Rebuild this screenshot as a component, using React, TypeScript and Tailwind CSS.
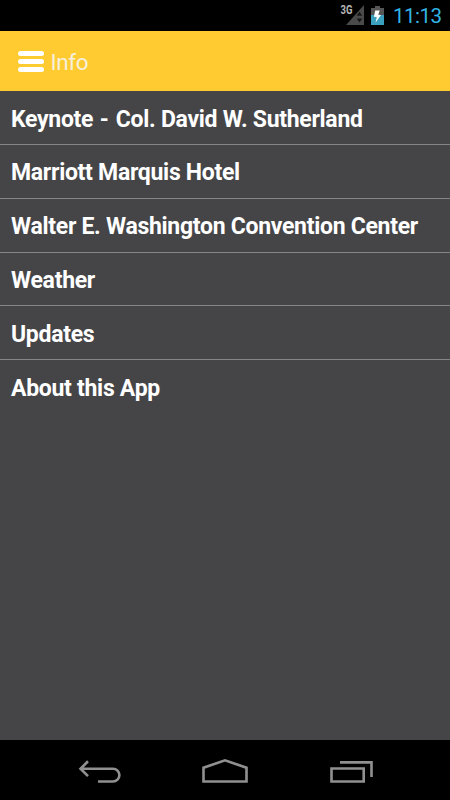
const items = [
  { label: "Keynote - Col. David W. Sutherland" },
  { label: "Marriott Marquis Hotel" },
  { label: "Walter E. Washington Convention Center" },
  { label: "Weather" },
  { label: "Updates" },
  { label: "About this App" },
];

function StatusBar() {
  return (
    <div className="flex h-[31px] shrink-0 items-start justify-end bg-black pr-2">
      <svg className="mt-[3px] mr-[6px] shrink-0" width="25" height="24" viewBox="0 0 25 24">
        <path d="M24 2V22H6Z" fill="#4a4a4a" />
        <path d="M19.5 8.7 22.3 12.8h-5.6ZM19.5 19.5 22.3 15.4h-5.6Z" fill="#161616" />
        <text x="0.6" y="11.3" fill="#b5b5b5" stroke="#000" strokeWidth="2" paintOrder="stroke" fontFamily="Roboto, sans-serif" fontWeight="700" fontSize="12" textLength="12" lengthAdjust="spacingAndGlyphs">3G</text>
      </svg>
      <svg className="mt-[5px] mr-[9px] shrink-0" width="13" height="20" viewBox="0 0 13 20">
        <path d="M4 1h5v2h4v7H0V3h4Z" fill="#565656" />
        <path d="M0 10h13v10H0Z" fill="#3aa0bd" />
        <path d="M4.2 5.5h4.5L7.3 9.7l2.7.3-5.4 7.6 1.2-5.6-2.9-.3Z" fill="#fff" />
      </svg>
      <span className="mt-1 h-6 w-[49px] whitespace-nowrap text-[20.5px] leading-6 tracking-[-0.5px] text-[#33b5e5]">11:13</span>
    </div>
  );
}

function Header() {
  return (
    <header className="flex h-[60.4px] shrink-0 items-center bg-[#ffcb31] pl-[18px]">
      <div className="flex w-[26px] flex-col gap-[3px]">
        <div className="h-[5px] rounded-full bg-white" />
        <div className="h-[5px] rounded-full bg-white" />
        <div className="h-[5px] rounded-full bg-white" />
      </div>
      <h1 className="ml-[6.5px] mt-[2px] text-[22.5px] font-normal leading-7 tracking-[-0.4px] text-[#f6efdc]">Info</h1>
    </header>
  );
}

function NavBar() {
  return (
    <nav className="flex h-[60px] shrink-0 bg-black">
      <svg width="450" height="60" viewBox="0 0 450 60" fill="none" stroke="#909090" strokeWidth="2.6">
        <path d="M80.5 28.7H113a6.4 6.4 0 0 1 0 12.8H98M88 21.3 80.5 28.7l7.5 7.4" />
        <path d="M203.5 41.5V27.7L225 20.3l21.5 7.4v13.8Z" />
        <path d="M331.5 28.5h32.2v13h-32.2ZM340 22.4h31.5V37" />
      </svg>
    </nav>
  );
}

function Label({ text }: { text: string }) {
  const [lead, ...rest] = text.split(" - ");
  if (rest.length === 0) return <>{text}</>;
  return (
    <>
      {lead}
      <span className="tracking-[0.7px]"> - </span>
      {rest.join(" - ")}
    </>
  );
}

export default function App() {
  return (
    <div className="flex h-[800px] w-[450px] flex-col overflow-hidden bg-[#454547] font-['Roboto',sans-serif]">
      <StatusBar />
      <Header />
      <main className="flex-1">
        {items.map((item, index) => (
          <div
            key={item.label}
            className={
              index < items.length - 1
                ? "flex h-[53.75px] items-center border-b border-[#858587] pl-[11px]"
                : "flex h-[53.75px] items-center pl-[11px]"
            }
          >
            <span className="mt-[3.6px] whitespace-pre text-[23px] font-bold leading-7 tracking-[-0.29px] text-white">
              <Label text={item.label} />
            </span>
          </div>
        ))}
      </main>
      <NavBar />
    </div>
  );
}
